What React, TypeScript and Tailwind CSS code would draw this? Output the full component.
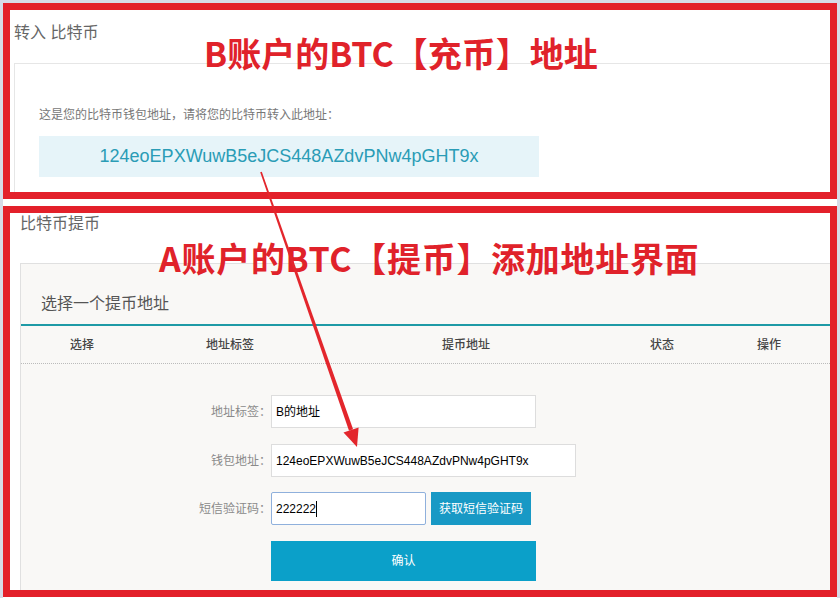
const FONT = { fontFamily: '"Liberation Sans", "Noto Sans CJK SC", sans-serif' };
const NOTE = { fontFamily: '"Noto Sans CJK SC", sans-serif' };

const columns = ["选择", "地址标签", "提币地址", "状态", "操作"];

const FormRow = ({ label, children }: { label: string; children: React.ReactNode }) => (
  <div className="flex items-center">
    <div className="w-[250px] text-right text-[12px] text-[#8a8a8a]">{label}</div>
    {children}
  </div>
);

const Arrow = () => (
  <svg className="absolute left-0 top-0 pointer-events-none" width="840" height="598" viewBox="0 0 840 598">
    <polygon points="260.2,172.3 261.8,171.7 353.1,429.3 349.0,430.7" fill="#e3262c" />
    <polygon points="343.5,432.6 358.6,427.4 357,447" fill="#e3262c" />
  </svg>
);

export default function App() {
  return (
    <div className="relative w-[840px] h-[598px] bg-[#d7dbe8] overflow-hidden" style={FONT}>
      <div className="ml-[3px] mt-[3px] w-[834px] h-[595px] bg-white flex flex-col gap-[7px]">
        {/* deposit address */}
        <section className="h-[196px] border-[7px] border-[#e3202a] overflow-hidden">
          <div className="pl-[4px] pt-[13px] text-[16px] leading-[20px] text-[#666]">转入 比特币</div>
          <div className="mt-[20px] ml-[4px] h-[200px] border-t border-l border-[#e6e6e6] pl-[24px] pt-[43px]">
            <div className="text-[12px] leading-[16px] text-[#777]">这是您的比特币钱包地址，请将您的比特币转入此地址：</div>
            <div className="mt-[13px] w-[500px] h-[41px] bg-[#e6f4f9] flex items-center justify-center text-[18px] text-[#2a9cb6]">
              124eoEPXWuwB5eJCS448AZdvPNw4pGHT9x
            </div>
          </div>
        </section>

        {/* withdraw */}
        <section className="h-[391px] border-[7px] border-[#e3202a] overflow-hidden">
          <div className="pl-[10px] mt-px text-[16px] leading-[20px] text-[#666]">比特币提币</div>
          <div className="mt-[29px] ml-[10px] h-[400px] border-t border-l border-[#e0e0e0] bg-[#f9f8f6]">
            <div className="pl-[20px] pt-[29px] pb-[9px] text-[16px] leading-[22px] text-[#555] border-b-2 border-[#1e9aa6]">
              选择一个提币地址
            </div>
            <div className="grid grid-cols-[122px_174px_298px_94px_120px] h-[38px] items-center border-b border-dotted border-[#bbb] text-center text-[12px] font-medium text-[#444]">
              {columns.map((c) => (
                <div key={c}>{c}</div>
              ))}
            </div>

            <div className="flex flex-col pt-[31px]">
              <FormRow label="地址标签：">
                <div className="w-[265px] h-[33px] border border-[#ddd] bg-white flex items-center pl-[4px] text-[12px] text-black">B的地址</div>
              </FormRow>
              <div className="mt-[16px]">
                <FormRow label="钱包地址：">
                  <div className="w-[305px] h-[33px] border border-[#ddd] bg-white flex items-center pl-[4px] text-[12px] text-black">124eoEPXWuwB5eJCS448AZdvPNw4pGHT9x</div>
                </FormRow>
              </div>
              <div className="mt-[15px]">
                <FormRow label="短信验证码：">
                  <div className="w-[155px] h-[33px] border border-[#8fb0dc] bg-white flex items-center pl-[4px] text-[12px] text-black rounded-[2px]">
                    222222<span className="w-px h-[16px] bg-black" />
                  </div>
                  <button className="ml-[5px] w-[100px] h-[33px] bg-[#1899c5] text-white text-[12px]">获取短信验证码</button>
                </FormRow>
              </div>
              <div className="mt-[16px] pl-[250px]">
                <button className="w-[265px] h-[40px] bg-[#0ba0c9] text-white text-[12px]">确认</button>
              </div>
            </div>
          </div>
        </section>
      </div>

      {/* annotations */}
      <div className="absolute left-[204px] top-[36px] text-[34px] leading-[34px] font-bold text-[#e0222a] whitespace-nowrap" style={NOTE}>
        B账户的BTC【充币】地址
      </div>
      <div className="absolute left-[159px] top-[241px] text-[34px] leading-[34px] font-bold tracking-[0.7px] text-[#e0222a] whitespace-nowrap" style={NOTE}>
        A账户的BTC【提币】添加地址界面
      </div>
      <Arrow />
    </div>
  );
}
